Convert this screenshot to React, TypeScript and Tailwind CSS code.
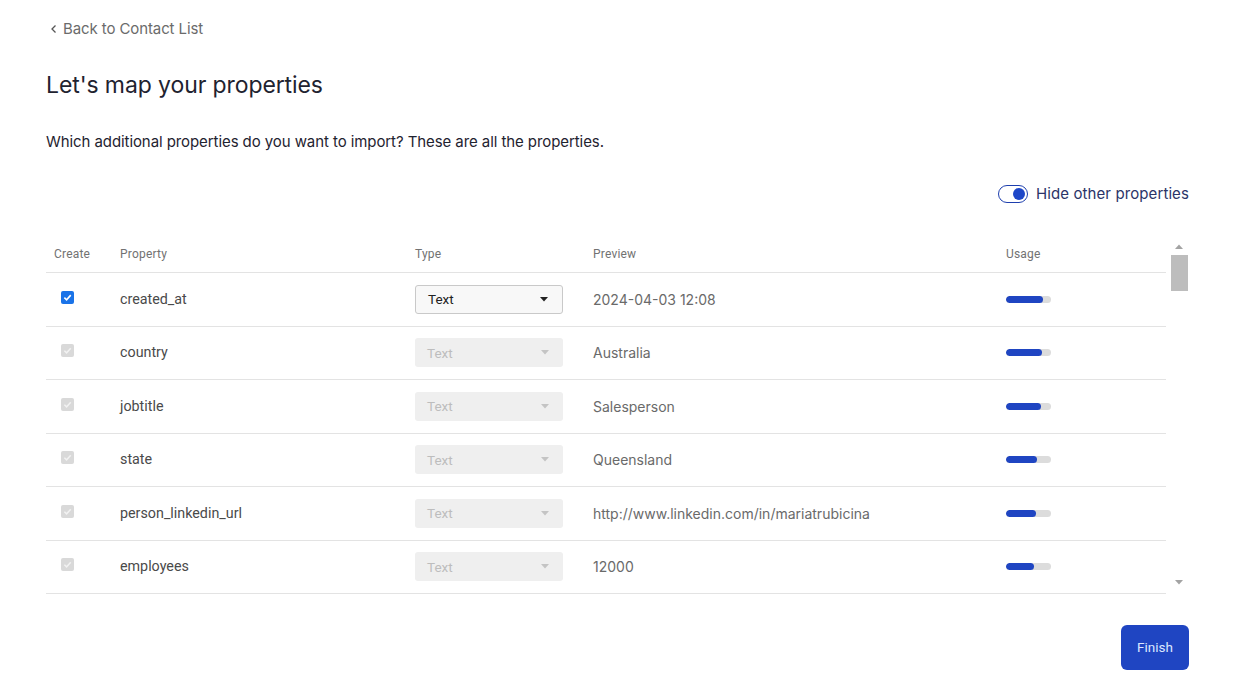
import React from "react";

const rows = [
  { name: "created_at", preview: "2024-04-03 12:08", usage: 37, active: true },
  { name: "country", preview: "Australia", usage: 36 },
  { name: "jobtitle", preview: "Salesperson", usage: 35 },
  { name: "state", preview: "Queensland", usage: 31 },
  { name: "person_linkedin_url", preview: "http://www.linkedin.com/in/mariatrubicina", usage: 30 },
  { name: "employees", preview: "12000", usage: 28 },
];

function Check({ active }: { active?: boolean }) {
  return active ? (
    <div className="w-[13px] h-[13px] rounded-[2px] bg-[#1a73e8] flex items-center justify-center">
      <svg width="9" height="9" viewBox="0 0 10 10">
        <path d="M1.5 5.2 L4 7.6 L8.6 2.4" stroke="white" strokeWidth="1.8" fill="none" />
      </svg>
    </div>
  ) : (
    <div className="w-[13px] h-[13px] rounded-[2px] bg-[#d9d9d9] flex items-center justify-center">
      <svg width="9" height="9" viewBox="0 0 10 10">
        <path d="M1.5 5.2 L4 7.6 L8.6 2.4" stroke="#f2f2f2" strokeWidth="1.6" fill="none" />
      </svg>
    </div>
  );
}

export default function App() {
  return (
    <div className="w-[1251px] h-[699px] bg-white pl-[46px] pr-[62px] pt-[18px] text-[#222]" style={{ fontFamily: "Inter, 'Noto Sans', sans-serif" }}>
      <div className="flex items-center gap-[5px] text-[15px] text-[#6b6b6b] pl-[4px] h-[22px] tracking-[-0.1px]">
        <svg width="8" height="10" viewBox="0 0 8 10">
          <path d="M5.5 1.5 L2 5 L5.5 8.5" stroke="#555" strokeWidth="1.3" fill="none" />
        </svg>
        <span>Back to Contact List</span>
      </div>
      <h1 className="mt-[29px] text-[23px] leading-[32px] text-[#1f2330] font-normal tracking-[-0.1px]">Let's map your properties</h1>
      <p className="mt-[31px] text-[15px] leading-[20px] text-[#1f2330] tracking-[-0.08px]">
        Which additional properties do you want to import? These are all the properties.
      </p>
      <div className="flex justify-end items-center gap-[8px] mt-[31px] h-[22px]">
        <div className="w-[30px] h-[18px] rounded-full border border-[#1e3fae] bg-white flex items-center justify-end pr-[2px]">
          <div className="w-[12px] h-[12px] rounded-full bg-[#1e47c8]" />
        </div>
        <span className="text-[15px] text-[#2b3468] tracking-[0.1px]">Hide other properties</span>
      </div>

      <div className="flex mt-[32px] h-[357px]" style={{ fontFamily: "Roboto, 'Noto Sans', sans-serif" }}>
        <div className="flex-1">
          <div className="grid grid-cols-[74px_295px_178px_413px_1fr] items-end h-[36px] pb-[9px] border-b border-[#e3e3e3] text-[12px] text-[#727272] tracking-[0.2px]">
            <div className="pl-[8px]">Create</div>
            <div>Property</div>
            <div>Type</div>
            <div>Preview</div>
            <div>Usage</div>
          </div>
          {rows.map((r) => (
            <div key={r.name} className="grid grid-cols-[74px_295px_178px_413px_1fr] items-center h-[53.5px] border-b border-[#e3e3e3] text-[14.3px]">
              <div className="pl-[15px] -mt-[4px]">
                <Check active={r.active} />
              </div>
              <div className="text-[#4a4a4a]">{r.name}</div>
              <div>
                {r.active ? (
                  <div className="w-[148px] h-[29px] border border-[#c9c9c9] rounded-[3px] bg-[#f8f8f8] flex items-center justify-between pl-[12px] pr-[14px] text-[13.5px] text-[#222]">
                    <span>Text</span>
                    <svg width="8" height="5" viewBox="0 0 8 5"><path d="M0 0 H8 L4 4.5 Z" fill="#222" /></svg>
                  </div>
                ) : (
                  <div className="w-[148px] h-[29px] rounded-[3px] bg-[#efefef] flex items-center justify-between pl-[12px] pr-[14px] text-[13.5px] text-[#bdbdbd]">
                    <span>Text</span>
                    <svg width="8" height="5" viewBox="0 0 8 5"><path d="M0 0 H8 L4 4.5 Z" fill="#c4c4c4" /></svg>
                  </div>
                )}
              </div>
              <div className="text-[#6a6a6a] text-[14px]" style={{ fontFamily: "Inter, sans-serif" }}>{r.preview}</div>
              <div>
                <div className="w-[45px] h-[7px] rounded-full bg-[#dcdcdc] overflow-hidden">
                  <div className="h-full rounded-full bg-[#1f45c2]" style={{ width: `${r.usage}px` }} />
                </div>
              </div>
            </div>
          ))}
        </div>
        <div className="w-[20px] ml-[3px] flex flex-col items-center">
          <svg width="10" height="8" viewBox="0 0 10 8" className="mt-[6px]"><path d="M1 6 H9 L5 1.5 Z" fill="#a3a3a3" /></svg>
          <div className="w-[17px] h-[36px] bg-[#bdbdbd] mt-[4px]" />
          <div className="flex-1" />
          <svg width="10" height="8" viewBox="0 0 10 8" className="mb-[8px]"><path d="M1 2 H9 L5 6.5 Z" fill="#a3a3a3" /></svg>
        </div>
      </div>

      <div className="flex justify-end mt-[31px]">
        <button className="w-[68px] h-[45px] rounded-[6px] bg-[#1f45c2] text-[#dbe7ff] text-[13.5px]" style={{ fontFamily: "Roboto, sans-serif" }}>
          Finish
        </button>
      </div>
    </div>
  );
}
